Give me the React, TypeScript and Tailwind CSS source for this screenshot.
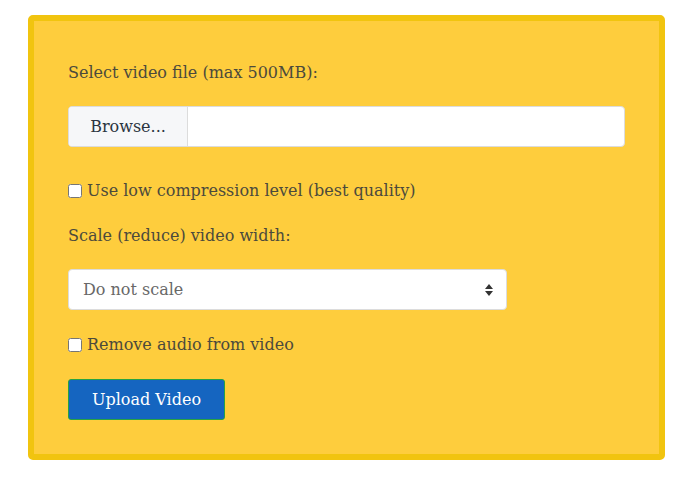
export default function App() {
  return (
    <div className="min-h-screen bg-white pt-[15px] pl-[28px]" style={{ fontFamily: '"DejaVu Serif", serif' }}>
      <form className="w-[637px] h-[445px] rounded-[5px] border-[6px] border-[#f1c40f] bg-[#fecd3d] px-[34px] pt-[40px] text-[16px] text-[#4c4a3c]">
        <label className="block leading-6">Select video file (max 500MB):</label>
        <div className="mt-[21px] flex h-[41px] overflow-hidden rounded-[4px] border border-[#dcdcdc] bg-white">
          <span className="flex w-[119px] items-center justify-center border-r border-[#dcdcdc] bg-[#f6f7f9] text-[#2b3440]">
            Browse...
          </span>
          <span className="flex-1" />
        </div>
        <label className="mt-[32px] flex items-center leading-6">
          <input type="checkbox" className="mr-[5px] h-[14px] w-[14px]" />
          Use low compression level (best quality)
        </label>
        <label className="mt-[21px] block leading-6">Scale (reduce) video width:</label>
        <div className="mt-[21px] flex h-[41px] w-[439px] items-center justify-between rounded-[4px] border border-[#dcdcdc] bg-white pl-[14px] pr-[12px] text-[#686868]">
          <span>Do not scale</span>
          <svg width="10" height="14" viewBox="0 0 10 14" className="text-[#333]">
            <path d="M5 1 L9 6 H1 Z M5 13 L9 8 H1 Z" fill="currentColor" />
          </svg>
        </div>
        <label className="mt-[23px] flex items-center leading-6">
          <input type="checkbox" className="mr-[5px] h-[14px] w-[14px]" />
          Remove audio from video
        </label>
        <button
          type="button"
          className="mt-[22px] h-[41px] w-[157px] rounded-[3px] border border-[#27a243] bg-[#1565c0] text-white"
        >
          Upload Video
        </button>
      </form>
    </div>
  );
}
